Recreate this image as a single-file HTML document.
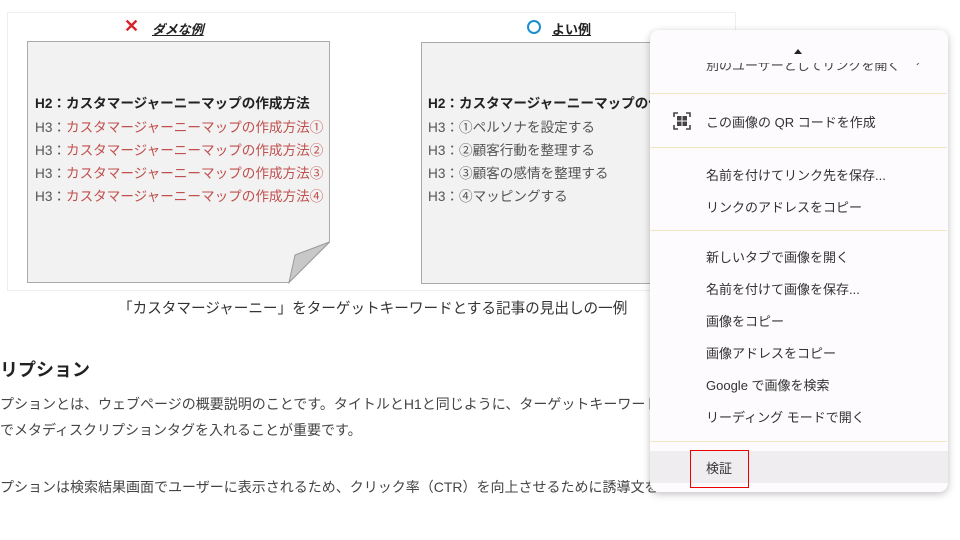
<!DOCTYPE html>
<html><head><meta charset="utf-8"><style>
*{margin:0;padding:0;box-sizing:border-box}
body{width:960px;height:540px;background:#fff;position:relative;overflow:hidden;font-family:"Liberation Sans","Noto Sans CJK JP",sans-serif;color:#333}
.a{position:absolute;white-space:nowrap}
.frame{position:absolute;left:7px;top:12px;width:729px;height:279px;border:1px solid #eee;background:#fff}
.card{position:absolute;top:42px;height:242px;background:#f2f2f2;border:1px solid #aaa}
.ln{position:absolute;font-size:13.6px;color:#555;white-space:nowrap}
.ln b{color:#222}
.r{color:#c0504d}
.mi{position:absolute;left:706px;font-size:13px;color:#333;white-space:nowrap}
.sep{position:absolute;left:650px;width:297px;height:1px;background:#efe6c4}
</style></head><body>
<div class="frame"></div>
<div class="a" style="left:124px;top:16px;font-size:18px;color:#d8232a;font-weight:bold">✕</div>
<div class="a" style="left:152px;top:19px;font-size:13px;font-weight:bold;text-decoration:underline;color:#222;font-style:italic">ダメな例</div>
<div class="a" style="left:527px;top:20px;width:14px;height:14px;border:2.5px solid #1a8fd0;border-radius:50%"></div>
<div class="a" style="left:552px;top:19px;font-size:13px;font-weight:bold;text-decoration:underline;color:#222">よい例</div>
<svg class="a" style="left:27px;top:41px" width="306" height="245"><polygon points="0.5,0.5 302.5,0.5 302.5,201 262,241.5 0.5,241.5" fill="#f2f2f2" stroke="#aaa"/><polygon points="302.5,201 268,214 262,241.5" fill="#c8c8c8" stroke="#999"/></svg>
<div class="card" style="left:421px;width:260px"></div>
<div class="ln" style="left:35px;top:92px"><b>H2：カスタマージャーニーマップの作成方法</b></div>
<div class="ln" style="left:35px;top:116px">H3：<span class="r">カスタマージャーニーマップの作成方法①</span></div>
<div class="ln" style="left:35px;top:139px">H3：<span class="r">カスタマージャーニーマップの作成方法②</span></div>
<div class="ln" style="left:35px;top:162px">H3：<span class="r">カスタマージャーニーマップの作成方法③</span></div>
<div class="ln" style="left:35px;top:185px">H3：<span class="r">カスタマージャーニーマップの作成方法④</span></div>
<div class="ln" style="left:428px;top:92px"><b>H2：カスタマージャーニーマップの作成方法</b></div>
<div class="ln" style="left:428px;top:116px">H3：①ペルソナを設定する</div>
<div class="ln" style="left:428px;top:139px">H3：②顧客行動を整理する</div>
<div class="ln" style="left:428px;top:162px">H3：③顧客の感情を整理する</div>
<div class="ln" style="left:428px;top:185px">H3：④マッピングする</div>
<div class="a" style="left:118px;top:297px;font-size:14.6px;color:#333">「カスタマージャーニー」をターゲットキーワードとする記事の見出しの一例</div>
<div class="a" style="left:0;top:356px;font-size:18px;font-weight:bold;color:#222">リプション</div>
<div class="a" style="left:0;top:394px;font-size:14px;color:#444">プションとは、ウェブページの概要説明のことです。タイトルとH1と同じように、ターゲットキーワードを含めたメタディスクリプションタグ</div>
<div class="a" style="left:0;top:420px;font-size:14px;color:#444">でメタディスクリプションタグを入れることが重要です。</div>
<div class="a" style="left:0;top:477px;font-size:14px;color:#444">プションは検索結果画面でユーザーに表示されるため、クリック率（CTR）を向上させるために誘導文を</div>
<div class="a" style="left:650px;top:30px;width:298px;height:462px;background:#fdfbfd;border-radius:9px;box-shadow:0 2px 8px rgba(0,0,0,.25);overflow:hidden">
 <div class="a" style="left:0;top:421px;width:298px;height:32px;background:#efedf0"></div>
</div>
<div class="a" style="left:794px;top:49px;width:0;height:0;border-left:4px solid transparent;border-right:4px solid transparent;border-bottom:5px solid #222"></div>
<div style="position:absolute;left:650px;top:63px;width:297px;height:14px;overflow:hidden"><div class="mi" style="left:56px;top:-8px;color:#444">別のユーザーとしてリンクを開く</div><div class="a" style="left:266px;top:-6px;font-size:11px">›</div></div>
<div class="sep" style="top:93px"></div>
<svg class="a" style="left:673px;top:112px" width="18" height="18" fill="none" stroke="#444" stroke-width="1.6"><path d="M1 5V1h4M13 1h4v4M17 13v4h-4M5 17H1v-4"/><rect x="4" y="4" width="4.5" height="4.5" fill="#444" stroke="none"/><rect x="9.5" y="4" width="4.5" height="4.5" fill="#444" stroke="none"/><rect x="4" y="9.5" width="4.5" height="4.5" fill="#444" stroke="none"/><rect x="9.5" y="9.5" width="4.5" height="4.5" fill="#444" stroke="none"/></svg>
<div class="mi" style="top:112px">この画像の QR コードを作成</div>
<div class="sep" style="top:147px"></div>
<div class="mi" style="top:165px">名前を付けてリンク先を保存...</div>
<div class="mi" style="top:197px">リンクのアドレスをコピー</div>
<div class="sep" style="top:230px"></div>
<div class="mi" style="top:247px">新しいタブで画像を開く</div>
<div class="mi" style="top:279px">名前を付けて画像を保存...</div>
<div class="mi" style="top:311px">画像をコピー</div>
<div class="mi" style="top:343px">画像アドレスをコピー</div>
<div class="mi" style="top:375px">Google で画像を検索</div>
<div class="mi" style="top:407px">リーディング モードで開く</div>
<div class="sep" style="top:441px"></div>
<div class="mi" style="top:458px">検証</div>
<div class="a" style="left:690px;top:450px;width:59px;height:38px;border:1px solid #e00"></div>
</body></html>
